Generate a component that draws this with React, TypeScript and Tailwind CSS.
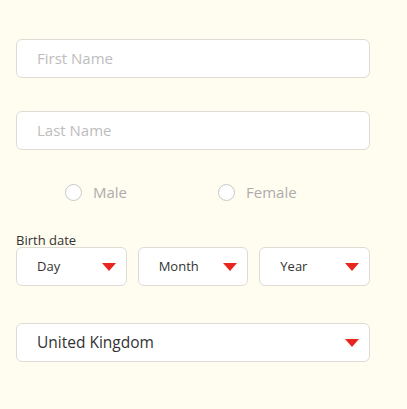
import React from "react";

const Arrow = () => (
  <svg width="14" height="8" viewBox="0 0 14 8" className="shrink-0">
    <polygon points="0,0 14,0 7,8" fill="#e8251f" />
  </svg>
);

const Radio = ({ label }: { label: string }) => (
  <label className="flex items-center gap-[11px]">
    <span className="w-[17px] h-[17px] rounded-full border border-[#c8c8c8] bg-white" />
    <span className="text-[15px] text-[#adadad]">{label}</span>
  </label>
);

const Select = ({ label }: { label: string }) => (
  <div className="h-[39px] bg-white border border-[#dedbd6] rounded-[6px] flex items-center justify-between pl-[20px] pr-[10px]">
    <span className="text-[13px] text-[#333]">{label}</span>
    <Arrow />
  </div>
);

export default function App() {
  return (
    <div
      className="w-[407px] h-[409px] bg-[#fffcf0] pt-[39px] pl-[16px]"
      style={{ fontFamily: '"Open Sans", sans-serif' }}
    >
      <div className="w-[354px] flex flex-col">
        <div className="h-[39px] bg-white border border-[#dedbd6] rounded-[6px] flex items-center pl-[20px]">
          <span className="text-[15px] text-[#bdbdbd]">First Name</span>
        </div>
        <div className="h-[39px] mt-[33px] bg-white border border-[#dedbd6] rounded-[6px] flex items-center pl-[20px]">
          <span className="text-[15px] text-[#bdbdbd]">Last Name</span>
        </div>
        <div className="grid grid-cols-2 mt-[31px] h-[17px] items-center">
          <div className="pl-[49px]"><Radio label="Male" /></div>
          <div className="pl-[25px]"><Radio label="Female" /></div>
        </div>
        <div className="mt-[35px] text-[13px] leading-[14px] text-[#333]">Birth date</div>
        <div className="grid grid-cols-3 gap-[11px]">
          <Select label="Day" />
          <Select label="Month" />
          <Select label="Year" />
        </div>
        <div className="h-[39px] mt-[37px] bg-white border border-[#dedbd6] rounded-[6px] flex items-center justify-between pl-[20px] pr-[10px]">
          <span className="text-[15.5px] text-[#333]">United Kingdom</span>
          <Arrow />
        </div>
      </div>
    </div>
  );
}
